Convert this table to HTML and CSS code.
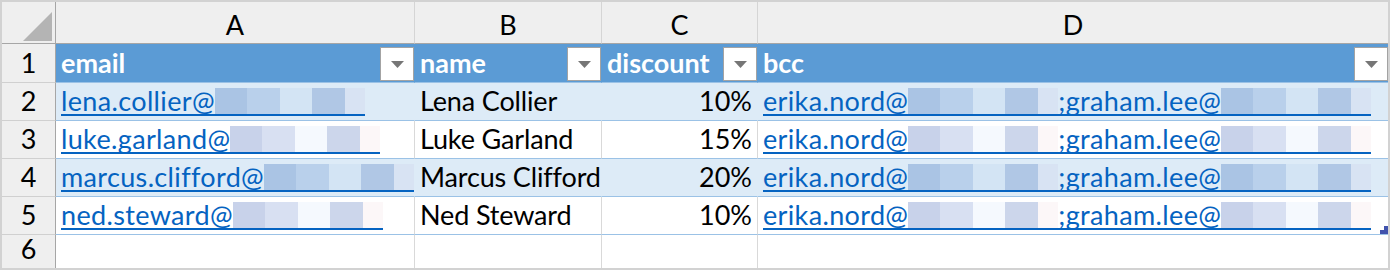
FILE: index.html
```html
<!DOCTYPE html>
<html>
<head>
<meta charset="utf-8">
<link rel="stylesheet" href="styles.css">
</head>
<body>
<div class="sheet">
  <div class="corner"><svg width="53" height="41" viewBox="0 0 53 41"><polygon points="21,39 50,39 50,10" fill="#b4b4b4"/></svg></div>
  <div class="colhead">A</div>
  <div class="colhead">B</div>
  <div class="colhead">C</div>
  <div class="colhead last">D</div>

  <div class="rowhead">1</div>
  <div class="th"><span class="t">email</span><span class="dd"><svg width="13" height="7" viewBox="0 0 13 7"><polygon points="0,0 13,0 6.5,7" fill="#767676"/></svg></span></div>
  <div class="th"><span class="t">name</span><span class="dd"><svg width="13" height="7" viewBox="0 0 13 7"><polygon points="0,0 13,0 6.5,7" fill="#767676"/></svg></span></div>
  <div class="th"><span class="t">discount</span><span class="dd"><svg width="13" height="7" viewBox="0 0 13 7"><polygon points="0,0 13,0 6.5,7" fill="#767676"/></svg></span></div>
  <div class="th last"><span class="t">bcc</span><span class="dd"><svg width="13" height="7" viewBox="0 0 13 7"><polygon points="0,0 13,0 6.5,7" fill="#767676"/></svg></span></div>

  <div class="rowhead">2</div>
  <div class="td band link"><a class="lnk"><span class="t">lena.collier@</span><span class="mask"><i></i><i></i><i></i><i></i><i></i></span></a></div>
  <div class="td band"><span class="t name">Lena Collier</span></div>
  <div class="td band num"><span class="t">10%</span></div>
  <div class="td band link last"><a class="lnk"><span class="t">erika.nord@</span><span class="mask"><i></i><i></i><i></i><i></i><i></i></span><span class="t">;graham.lee@</span><span class="mask"><i></i><i></i><i></i><i></i><i></i></span></a></div>

  <div class="rowhead">3</div>
  <div class="td plain link"><a class="lnk"><span class="t">luke.garland@</span><span class="mask"><i></i><i></i><i></i><i></i><i></i></span></a></div>
  <div class="td plain"><span class="t name">Luke Garland</span></div>
  <div class="td plain num"><span class="t">15%</span></div>
  <div class="td plain link last"><a class="lnk"><span class="t">erika.nord@</span><span class="mask"><i></i><i></i><i></i><i></i><i></i></span><span class="t">;graham.lee@</span><span class="mask"><i></i><i></i><i></i><i></i><i></i></span></a></div>

  <div class="rowhead">4</div>
  <div class="td band link"><a class="lnk"><span class="t">marcus.clifford@</span><span class="mask"><i></i><i></i><i></i><i></i><i></i></span></a></div>
  <div class="td band"><span class="t name">Marcus Clifford</span></div>
  <div class="td band num"><span class="t">20%</span></div>
  <div class="td band link last"><a class="lnk"><span class="t">erika.nord@</span><span class="mask"><i></i><i></i><i></i><i></i><i></i></span><span class="t">;graham.lee@</span><span class="mask"><i></i><i></i><i></i><i></i><i></i></span></a></div>

  <div class="rowhead">5</div>
  <div class="td plain link"><a class="lnk"><span class="t">ned.steward@</span><span class="mask"><i></i><i></i><i></i><i></i><i></i></span></a></div>
  <div class="td plain"><span class="t name">Ned Steward</span></div>
  <div class="td plain num"><span class="t">10%</span></div>
  <div class="td plain link last"><a class="lnk"><span class="t">erika.nord@</span><span class="mask"><i></i><i></i><i></i><i></i><i></i></span><span class="t">;graham.lee@</span><span class="mask"><i></i><i></i><i></i><i></i><i></i></span></a><span class="handle"><svg width="8" height="8" viewBox="0 0 8 8"><rect x="4" y="0" width="4" height="8" fill="#4153ad"/><rect x="0" y="4" width="8" height="4" fill="#4153ad"/></svg></span></div>

  <div class="rowhead end">6</div>
  <div class="td empty"></div>
  <div class="td empty"></div>
  <div class="td empty"></div>
  <div class="td empty last"></div>
</div>
</body>
</html>
```
FILE: styles.css
```css
* {
  box-sizing: border-box;
  margin: 0;
  padding: 0;
}

body {
  margin: 0;
  background: #ffffff;
  font-family: Lato, "Noto Sans", sans-serif;
  font-size: 27px;
  color: #000000;
}

.sheet {
  width: 1390px;
  height: 270px;
  border: 2px solid #d2d2d2;
  display: grid;
  grid-template-columns: 54px 359px 187px 156px 1fr;
  grid-template-rows: 42px 39px 38px 38px 38px 38px 1fr;
}

.t {
  display: block;
  line-height: 26px;
  white-space: nowrap;
}

.t.name {
  letter-spacing: -0.15px;
}

.corner {
  background: #efefef;
  border-right: 1px solid #a6a6a6;
  border-bottom: 1px solid #a6a6a6;
}

.corner svg {
  display: block;
}

.colhead {
  background: #efefef;
  border-bottom: 1px solid #a6a6a6;
  border-right: 1px solid #d5d5d5;
  display: flex;
  justify-content: center;
  align-items: flex-end;
  padding-bottom: 5px;
  line-height: 26px;
}

.colhead.last {
  border-right: none;
}

.rowhead {
  background: #efefef;
  border-right: 1px solid #a6a6a6;
  border-bottom: 1px solid #d0d0d0;
  display: flex;
  justify-content: center;
  align-items: flex-end;
  padding-bottom: 6px;
  line-height: 26px;
}

.rowhead.end {
  border-bottom: none;
}

.th {
  background: #5b9bd5;
  color: #ffffff;
  font-weight: 700;
  border-right: 1px solid #5b9bd5;
  border-bottom: 1px solid #9bc2e6;
  display: flex;
  justify-content: space-between;
  align-items: flex-end;
  padding-left: 5px;
  padding-bottom: 6px;
}

.th.last {
  border-right: none;
}

.dd {
  align-self: flex-start;
  margin-top: 3px;
  width: 34px;
  height: 34px;
  flex: none;
  background: #ffffff;
  border: 1px solid #a3a3a3;
  display: flex;
  align-items: center;
  justify-content: center;
}

.dd svg {
  display: block;
}

.td {
  display: flex;
  align-items: flex-end;
  padding-left: 5px;
  padding-bottom: 6px;
  border-bottom: 1px solid #9bc2e6;
  position: relative;
}

.td.band {
  background: #ddebf7;
  border-right: 1px solid #ddebf7;
}

.td.plain {
  background: #ffffff;
  border-right: 1px solid #d9d9d9;
}

.td.empty {
  background: #ffffff;
  border-right: 1px solid #d9d9d9;
  border-bottom: none;
}

.td.last {
  border-right: none;
}

.td.num {
  justify-content: flex-end;
  padding-left: 0;
  padding-right: 5px;
}

.td.link {
  padding-bottom: 4px;
}

.lnk {
  display: flex;
  align-items: flex-end;
  color: #0563c1;
  text-decoration: none;
  border-bottom: 2px solid #0563c1;
}

.lnk .t {
  letter-spacing: 0.35px;
}

.mask {
  display: flex;
  height: 26px;
}

.mask i {
  display: block;
  height: 26px;
}

.mask i:nth-child(1) { width: 32px; }
.mask i:nth-child(2) { width: 33px; }
.mask i:nth-child(3) { width: 32px; }
.mask i:nth-child(4) { width: 33px; }
.mask i:nth-child(5) { width: 20px; }

.band .mask i:nth-child(1) { background: #aac4e4; }
.band .mask i:nth-child(2) { background: #b9d0eb; }
.band .mask i:nth-child(3) { background: #d3e4f4; }
.band .mask i:nth-child(4) { background: #b0c7e5; }
.band .mask i:nth-child(5) { background: #d8e3f3; }

.plain .mask i:nth-child(1) { background: #c8d2ea; }
.plain .mask i:nth-child(2) { background: #d8e0f2; }
.plain .mask i:nth-child(3) { background: #f5f9fe; }
.plain .mask i:nth-child(4) { background: #ccd6eb; }
.plain .mask i:nth-child(5) { background: #fcf7f8; }

.handle {
  position: absolute;
  left: 622px;
  top: 29px;
  width: 8px;
  height: 8px;
}

.handle svg {
  display: block;
}
```
